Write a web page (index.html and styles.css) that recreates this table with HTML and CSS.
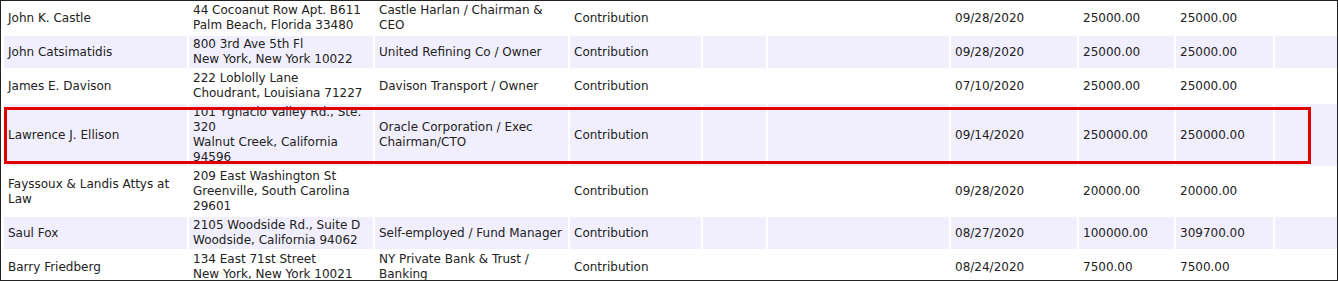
FILE: index.html
```html
<!DOCTYPE html>
<html>
<head>
<meta charset="utf-8">
<link rel="stylesheet" href="styles.css">
</head>
<body>
<div class="frame">
  <table class="grid">
    <tr>
      <td>John K. Castle</td>
      <td>44 Cocoanut Row Apt. B611<br>Palm Beach, Florida 33480</td>
      <td>Castle Harlan / Chairman &amp; CEO</td>
      <td>Contribution</td>
      <td></td>
      <td></td>
      <td>09/28/2020</td>
      <td>25000.00</td>
      <td>25000.00</td>
      <td></td>
    </tr>
    <tr class="alt">
      <td>John Catsimatidis</td>
      <td>800 3rd Ave 5th Fl<br>New York, New York 10022</td>
      <td>United Refining Co / Owner</td>
      <td>Contribution</td>
      <td></td>
      <td></td>
      <td>09/28/2020</td>
      <td>25000.00</td>
      <td>25000.00</td>
      <td></td>
    </tr>
    <tr>
      <td>James E. Davison</td>
      <td>222 Loblolly Lane<br>Choudrant, Louisiana 71227</td>
      <td>Davison Transport / Owner</td>
      <td>Contribution</td>
      <td></td>
      <td></td>
      <td>07/10/2020</td>
      <td>25000.00</td>
      <td>25000.00</td>
      <td></td>
    </tr>
    <tr class="alt">
      <td>Lawrence J. Ellison</td>
      <td>101 Ygnacio Valley Rd., Ste. 320<br>Walnut Creek, California 94596</td>
      <td>Oracle Corporation / Exec Chairman/CTO</td>
      <td>Contribution</td>
      <td></td>
      <td></td>
      <td>09/14/2020</td>
      <td>250000.00</td>
      <td>250000.00</td>
      <td></td>
    </tr>
    <tr>
      <td>Fayssoux &amp; Landis Attys at Law</td>
      <td>209 East Washington St<br>Greenville, South Carolina 29601</td>
      <td></td>
      <td>Contribution</td>
      <td></td>
      <td></td>
      <td>09/28/2020</td>
      <td>20000.00</td>
      <td>20000.00</td>
      <td></td>
    </tr>
    <tr class="alt">
      <td>Saul Fox</td>
      <td>2105 Woodside Rd., Suite D<br>Woodside, California 94062</td>
      <td>Self-employed / Fund Manager</td>
      <td>Contribution</td>
      <td></td>
      <td></td>
      <td>08/27/2020</td>
      <td>100000.00</td>
      <td>309700.00</td>
      <td></td>
    </tr>
    <tr>
      <td>Barry Friedberg</td>
      <td>134 East 71st Street<br>New York, New York 10021</td>
      <td>NY Private Bank &amp; Trust / Banking</td>
      <td>Contribution</td>
      <td></td>
      <td></td>
      <td>08/24/2020</td>
      <td>7500.00</td>
      <td>7500.00</td>
      <td></td>
    </tr>
  </table>
  <div class="highlight"></div>
</div>
</body>
</html>
```

FILE: styles.css
```css
html, body {
  margin: 0;
  padding: 0;
  background: #ffffff;
}

.frame {
  position: relative;
  width: 1336px;
  height: 279px;
  border: 1px solid #222222;
  overflow: hidden;
  background: #ffffff;
}

.grid {
  table-layout: fixed;
  border-collapse: separate;
  border-spacing: 2px;
  width: 1337px;
  margin: -1px 0 0 1px;
  font-family: Verdana, "DejaVu Sans", sans-serif;
  font-size: 12px;
  line-height: 15px;
  color: #222222;
}

.grid td {
  box-sizing: border-box;
  padding: 1px 3px 1px 4px;
  vertical-align: middle;
  height: 32px;
}

.grid tr.alt td {
  background: #f1effd;
}

.grid td:nth-child(1) { width: 183px; }
.grid td:nth-child(2) { width: 184px; }
.grid td:nth-child(3) { width: 193px; }
.grid td:nth-child(4) { width: 131px; }
.grid td:nth-child(5) { width: 63px; }
.grid td:nth-child(6) { width: 181px; }
.grid td:nth-child(7) { width: 126px; }
.grid td:nth-child(8) { width: 95px; }
.grid td:nth-child(9) { width: 97px; }
.grid td:nth-child(10) { width: 62px; }

.highlight {
  position: absolute;
  left: 3px;
  top: 106px;
  width: 1301px;
  height: 51px;
  border: 3px solid #e00000;
}
```
